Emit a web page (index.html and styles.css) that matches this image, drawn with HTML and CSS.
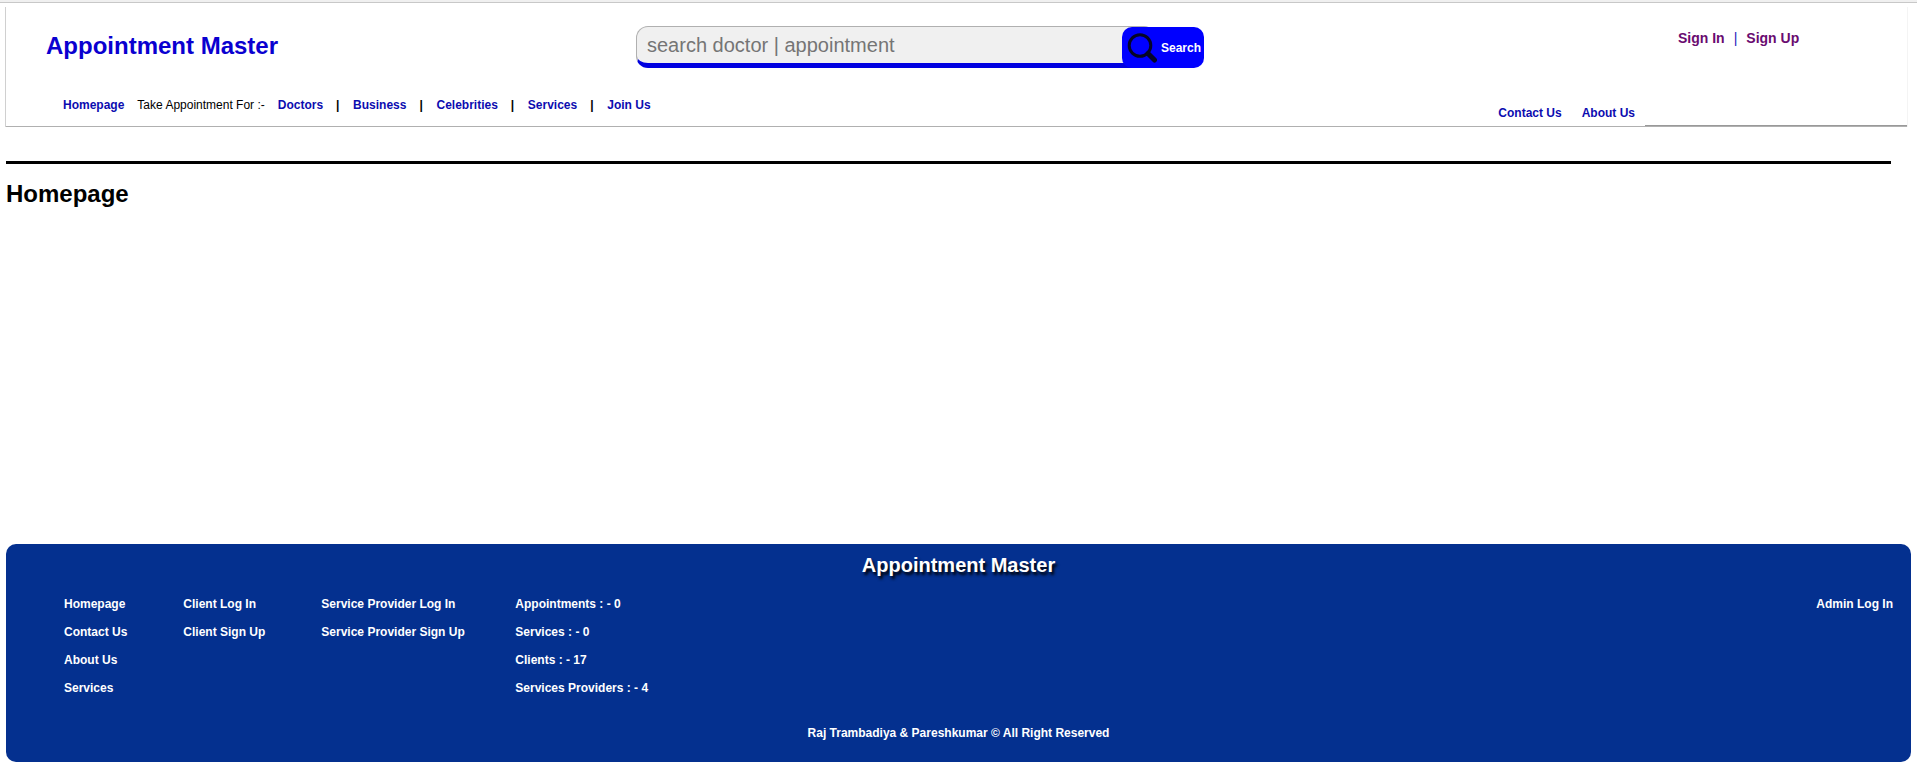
FILE: index.html
```html
<!DOCTYPE html>
<html lang="en">
<head>
<meta charset="utf-8">
<title>Appointment Master</title>
<link rel="stylesheet" href="styles.css">
</head>
<body>
<div class="top-strip"></div>
<header class="header">
  <div class="header-main">
    <a class="brand" href="#">Appointment Master</a>
    <form class="search">
      <input class="search-input" type="text" placeholder="search doctor | appointment" aria-label="search doctor or appointment">
      <button class="search-button" type="button">
        <svg class="search-icon" viewBox="0 0 30 30" aria-hidden="true"><circle cx="13" cy="12.5" r="10.8"/><path class="handle" d="M21 20.500l6.500 6.500"/></svg>
        <span>Search</span>
      </button>
    </form>
    <div class="account"><a href="#">Sign In</a><span>|</span><a href="#">Sign Up</a></div>
  </div>
  <div class="header-nav">
    <nav class="nav">
      <a href="#">Homepage</a>
      <span>Take Appointment For :-</span>
      <a href="#">Doctors</a><span class="bar">|</span>
      <a href="#">Business</a><span class="bar">|</span>
      <a href="#">Celebrities</a><span class="bar">|</span>
      <a href="#">Services</a><span class="bar">|</span>
      <a href="#">Join Us</a>
    </nav>
    <nav class="side-nav"><a href="#">Contact Us</a><a href="#">About Us</a></nav>
    <div class="nav-end"></div>
  </div>
</header>
<main class="main">
  <hr class="rule">
  <h1 class="page-title">Homepage</h1>
</main>
<footer class="footer">
  <h2 class="footer-title">Appointment Master</h2>
  <div class="footer-columns">
    <ul class="footer-list">
      <li><a href="#">Homepage</a></li>
      <li><a href="#">Contact Us</a></li>
      <li><a href="#">About Us</a></li>
      <li><a href="#">Services</a></li>
    </ul>
    <ul class="footer-list">
      <li><a href="#">Client Log In</a></li>
      <li><a href="#">Client Sign Up</a></li>
    </ul>
    <ul class="footer-list providers">
      <li><a href="#">Service Provider Log In</a></li>
      <li><a href="#">Service Provider Sign Up</a></li>
    </ul>
    <ul class="footer-list">
      <li>Appointments : - 0</li>
      <li>Services : - 0</li>
      <li>Clients : - 17</li>
      <li>Services Providers : - 4</li>
    </ul>
    <a class="admin" href="#">Admin Log In</a>
  </div>
  <p class="copyright">Raj Trambadiya &amp; Pareshkumar © All Right Reserved</p>
</footer>
</body>
</html>
```

FILE: styles.css
```css
* { box-sizing: border-box; }
body {
  margin: 0;
  min-height: 100vh;
  padding-bottom: 15px;
  display: flex;
  flex-direction: column;
  background: #fff;
  color: #000;
  font: 12px/16px "Liberation Sans", Arial, sans-serif;
}
a { color: #0c0cb0; font-weight: bold; text-decoration: none; }
.top-strip { height: 3px; background: #f0f0f0; border-bottom: 1px solid #c8c8c8; }
.header {
  margin: 4px 9px 0 5px;
  border-left: 1px solid #d0d0d0;
  border-right: 1px solid #f4f4f4;
}
.header-main {
  display: grid;
  grid-template-columns: 630fr 1042fr 229fr;
  align-items: start;
  padding-top: 19px;
}
.brand { padding-left: 40px; color: #0a00d0; font-size: 24px; line-height: 40px; }
.search { display: flex; align-items: flex-end; }
.search-input {
  width: 520px;
  height: 42px;
  padding: 0 10px;
  border: 1px solid #b0b0b0;
  border-bottom: 5px solid #0000e0;
  border-radius: 12px;
  background: #f0f0f0;
  font: 20px "Liberation Sans", Arial, sans-serif;
}
.search-input::placeholder { color: #757575; opacity: 1; }
.search-button {
  display: flex;
  align-items: center;
  gap: 4px;
  width: 82px;
  height: 41px;
  margin-left: -34px;
  padding: 0 0 0 5px;
  border: 0;
  border-radius: 10px;
  background: #00f;
  color: #fff;
  font: bold 12px "Liberation Sans", Arial, sans-serif;
}
.search-icon { flex: none; width: 30px; height: 30px; fill: none; stroke: #050528; stroke-width: 3; }
.search-icon .handle { stroke-width: 5; stroke-linecap: round; }
.account { display: flex; gap: 9px; padding-top: 4px; font-size: 14px; color: #22b; }
.account a { color: #6a0b70; }
.header-nav { display: flex; border-bottom: 1px solid #b0b0b0; }
.nav { display: flex; flex: 1; gap: 13px; padding: 29px 0 13px 57px; }
.bar { width: 4px; font-weight: bold; }
.side-nav { display: flex; gap: 20px; padding: 37px 10px 5px 0; }
.nav-end { width: 262px; border-bottom: 1px solid #999; }
.main { flex: 1; padding: 34px 26px 0 6px; }
.rule { height: 3px; margin: 0; border: 0; background: #000; }
.page-title { margin: 16px 0 0; font-size: 24px; line-height: 28px; }
.footer {
  margin: 0 6px;
  padding: 8px 18px 21px 58px;
  border-radius: 10px;
  background: #04308f;
  color: #fff;
  font-weight: bold;
}
.footer a { color: #fff; }
.footer-title {
  margin: 0 0 18px;
  padding-right: 40px;
  text-align: center;
  font-size: 20px;
  line-height: 26px;
  text-shadow: 2px 3px 3px #000;
}
.footer-columns { display: flex; align-items: flex-start; column-gap: 56px; }
.footer-list { display: grid; gap: 12px; margin: 0; padding: 0; list-style: none; }
.footer-list.providers { width: 138px; white-space: nowrap; }
.admin { margin-left: auto; }
.copyright { margin: 29px 40px 0 0; text-align: center; }
```
